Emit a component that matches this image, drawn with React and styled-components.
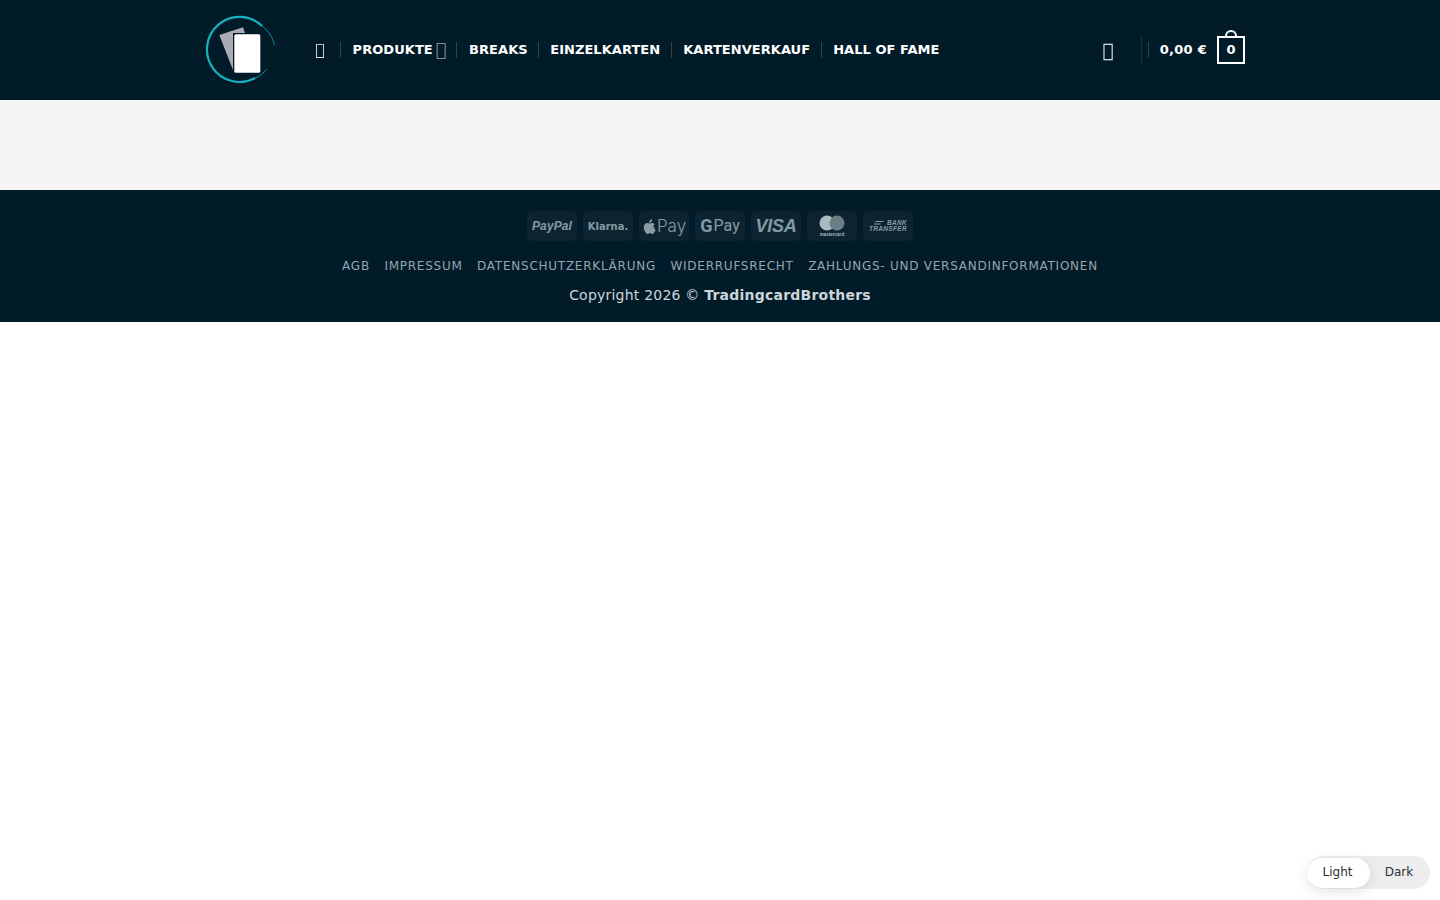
import React from "react";
import styled, { createGlobalStyle } from "styled-components";

const GlobalStyle = createGlobalStyle`
  html, body { margin: 0; padding: 0; background: #fff; }
  body { font-family: "DejaVu Sans", Verdana, sans-serif; }
  a { color: inherit; text-decoration: none; }
`;

const navy = "#021b28";

const Header = styled.header`
  height: 100px;
  padding-left: 10px;
  background: ${navy};
  display: flex;
  align-items: center;
  justify-content: center;
`;

const HeaderInner = styled.div`
  width: 1040px;
  display: flex;
  align-items: center;
`;

const Logo = styled.svg`
  width: 70px;
  height: 70px;
  flex: none;
  margin-right: 30px;
`;

const Nav = styled.nav`
  display: flex;
  align-items: center;
`;

const NavItem = styled.a`
  display: flex;
  align-items: center;
  height: 16px;
  padding: 0 11px;
  font-size: 13px;
  font-weight: 700;
  line-height: 16px;
  letter-spacing: 0.05px;
  text-transform: uppercase;
  color: #fff;
  white-space: nowrap;
  border-left: 1px solid rgba(255, 255, 255, 0.18);
  &:first-child { border-left: 0; padding: 0 15px 0 10px; }
  &:nth-child(2) { padding-left: 12px; padding-right: 9.500px; }
  &:nth-child(3) { padding-left: 12px; padding-right: 10.500px; }
`;

const Glyph = styled.span`
  font-family: "DejaVu Sans", sans-serif;
  font-weight: 400;
  font-size: ${(p) => p.$size || 16}px;
  line-height: 1;
  letter-spacing: 0;
  color: ${(p) => p.$color || "#fff"};
  margin-left: ${(p) => p.$gap || 0}px;
  will-change: opacity;
`;

const Actions = styled.div`
  margin-left: auto;
  display: flex;
  align-items: center;
`;

const SearchCell = styled.div`
  height: 28px;
  padding-right: 27px;
  display: flex;
  align-items: center;
  margin-right: 6px;
  border-right: 1px solid rgba(255, 255, 255, 0.1);
`;

const Cart = styled.a`
  display: flex;
  align-items: center;
  gap: 10px;
  height: 16px;
  padding-left: 11px;
  font-size: 13px;
  font-weight: 700;
  line-height: 16px;
  letter-spacing: 0.26px;
  color: #fff;
  border-left: 1px solid rgba(255, 255, 255, 0.18);
`;

const CartTotal = styled.span`
  margin-top: -1px;
`;

const Bag = styled.span`
  position: relative;
  width: 28px;
  height: 28px;
  box-sizing: border-box;
  padding-bottom: 1px;
  border: 2px solid #fff;
  display: flex;
  align-items: center;
  justify-content: center;
  font-size: 13px;
  letter-spacing: 0;
  &::before {
    content: "";
    position: absolute;
    top: -8px;
    left: 50%;
    width: 12px;
    height: 7px;
    margin-left: -6px;
    box-sizing: border-box;
    border: 2px solid #fff;
    border-bottom: 0;
    border-radius: 6px 6px 0 0;
  }
`;

const Main = styled.main`
  height: 90px;
  background: #f5f5f5;
`;

const Footer = styled.footer`
  height: 132px;
  box-sizing: border-box;
  padding-top: 21px;
  background: ${navy};
  display: flex;
  flex-direction: column;
  align-items: center;
`;

const Payments = styled.div`
  display: flex;
  gap: 6px;
  height: 30px;
`;

const Pay = styled.div`
  width: 50px;
  height: 30px;
  box-sizing: border-box;
  border-radius: 5px;
  background: rgba(255, 255, 255, 0.045);
  display: flex;
  align-items: center;
  justify-content: center;
  color: rgba(214, 230, 236, 0.62);
  overflow: hidden;
`;

const PayText = styled.span`
  font-family: ${(p) => p.$font || '"Liberation Sans", Arial, sans-serif'};
  font-size: ${(p) => p.$size}px;
  font-weight: ${(p) => p.$weight || 700};
  font-style: ${(p) => (p.$italic ? "italic" : "normal")};
  line-height: 1;
  letter-spacing: ${(p) => p.$track || 0}px;
  margin-left: ${(p) => p.$gap || 0}px;
  padding-top: ${(p) => p.$drop || 0}px;
`;

const BankMark = styled.div`
  display: flex;
  flex-direction: column;
  align-items: flex-end;
`;

const BankLine = styled.span`
  display: flex;
  align-items: center;
  gap: 3px;
  font-family: "Liberation Sans", Arial, sans-serif;
  font-size: 6.500px;
  font-weight: 700;
  font-style: italic;
  line-height: 6.500px;
  letter-spacing: 0.3px;
`;

const FooterLinks = styled.div`
  display: flex;
  gap: 14.500px;
  margin-top: 16px;
  font-size: 12px;
  line-height: 18px;
  letter-spacing: 0.75px;
  text-transform: uppercase;
  color: #97a5ad;
`;

const Copyright = styled.div`
  margin-top: 11px;
  font-size: 14px;
  line-height: 18px;
  letter-spacing: 0.22px;
  color: #cbd5da;
  b { font-weight: 700; }
`;

const Toggle = styled.div`
  position: fixed;
  right: 10px;
  bottom: 11px;
  width: 123px;
  height: 33px;
  border-radius: 17px;
  background: #ededed;
  display: flex;
  align-items: center;
  font-size: 12px;
  color: #2b2f33;
`;

const ToggleOption = styled.button`
  width: ${(p) => (p.$active ? 63 : 58)}px;
  height: 30px;
  padding: 0 ${(p) => (p.$active ? 2 : 0)}px 2px 0;
  border: 0;
  border-radius: 15px;
  font: inherit;
  color: inherit;
  background: ${(p) => (p.$active ? "#fff" : "transparent")};
  box-shadow: ${(p) => (p.$active ? "0 4px 14px rgba(0,0,0,.1)" : "none")};
`;

const navLinks = ["Breaks", "Einzelkarten", "Kartenverkauf", "Hall of Fame"];
const footerLinks = [
  "AGB",
  "Impressum",
  "Datenschutzerklärung",
  "Widerrufsrecht",
  "Zahlungs- und Versandinformationen",
];

function App() {
  return (
    <>
      <GlobalStyle />
      <Header>
        <HeaderInner>
          <Logo viewBox="0 0 70 70">
            <path
              d="M50 63A32.500 32.500 0 1 1 57 11"
              fill="none"
              stroke="#17b2bf"
              strokeWidth="2.200"
            />
            <path
              d="M62 54A33 33 0 0 1 49 64M56 10A34 34 0 0 1 69.500 30"
              fill="none"
              stroke="#17b2bf"
              strokeWidth="1"
              opacity=".75"
            />
            <path d="M14.300 20 38 12.300 40 18H28L28 55Z" fill="#a9adb3" />
            <rect x="29.300" y="19.300" width="26" height="38.400" rx="1.500" fill="#fff" />
          </Logo>
          <Nav>
            <NavItem>
              <Glyph $color="#d5e0e4">{"\ue800"}</Glyph>
            </NavItem>
            <NavItem>
              Produkte
              <Glyph $size={18} $color="rgba(255,255,255,.5)" $gap={3}>{"\ue801"}</Glyph>
            </NavItem>
            {navLinks.map((label) => (
              <NavItem key={label}>{label}</NavItem>
            ))}
          </Nav>
          <Actions>
            <SearchCell>
              <Glyph $size={19} $color="#d5e0e4">{"\ue802"}</Glyph>
            </SearchCell>
            <Cart>
              <CartTotal>0,00 €</CartTotal>
              <Bag>0</Bag>
            </Cart>
          </Actions>
        </HeaderInner>
      </Header>
      <Main />
      <Footer>
        <Payments>
          <Pay>
            <PayText $size={12} $italic $track={0.1}>PayPal</PayText>
          </Pay>
          <Pay>
            <PayText $size={10} $drop={2} $font='"DejaVu Sans", sans-serif'>Klarna.</PayText>
          </Pay>
          <Pay>
            <svg width="14" height="17" viewBox="0 0 14 17" fill="currentColor">
              <path d="M11.200 9c0-1.700 1.400-2.500 1.500-2.600-.8-1.200-2.100-1.400-2.500-1.400-1-.1-2 .6-2.600.6-.5 0-1.400-.6-2.300-.6C4.100 5 3 5.700 2.400 6.800c-1.300 2.200-.3 5.500.9 7.300.6.900 1.300 1.900 2.300 1.800.9 0 1.300-.6 2.400-.6s1.400.6 2.400.6 1.600-.9 2.200-1.800c.7-1 1-2 1-2.100-.1 0-1.400-.6-1.400-3zM9.400 3.700c.5-.6.900-1.500.8-2.400-.8 0-1.700.5-2.300 1.200-.5.6-.9 1.500-.8 2.300.9.100 1.800-.4 2.300-1.100z" />
            </svg>
            <PayText $size={17} $weight={300} $font='"Inter", sans-serif' $gap={1}>Pay</PayText>
          </Pay>
          <Pay>
            <PayText $size={18} $font='"Roboto", sans-serif'>G</PayText>
            <PayText $size={16} $weight={400} $font='"Roboto", sans-serif' $gap={1}>Pay</PayText>
          </Pay>
          <Pay>
            <PayText $size={18} $italic $track={-0.3}>VISA</PayText>
          </Pay>
          <Pay>
            <svg width="28" height="24" viewBox="0 0 28 24">
              <circle cx="9" cy="9" r="7.500" fill="#a9bac0" />
              <circle cx="19" cy="9" r="7.500" fill="#6d7f86" />
              <text x="14" y="22" fontSize="4.500" textAnchor="middle" fill="#a9bac0" fontFamily="Liberation Sans, sans-serif" fontWeight="700">mastercard</text>
            </svg>
          </Pay>
          <Pay>
            <BankMark>
              <BankLine>
                <svg width="10" height="4" viewBox="0 0 10 4" fill="currentColor">
                  <path d="M1.500 0H10L9 1H1ZM0 2.500H7L6.500 3.500H0Z" />
                </svg>
                BANK
              </BankLine>
              <BankLine>TRANSFER</BankLine>
            </BankMark>
          </Pay>
        </Payments>
        <FooterLinks>
          {footerLinks.map((label) => (
            <a key={label}>{label}</a>
          ))}
        </FooterLinks>
        <Copyright>
          Copyright 2026 © <b>TradingcardBrothers</b>
        </Copyright>
      </Footer>
      <Toggle>
        <ToggleOption $active>Light</ToggleOption>
        <ToggleOption>Dark</ToggleOption>
      </Toggle>
    </>
  );
}

export default App;
